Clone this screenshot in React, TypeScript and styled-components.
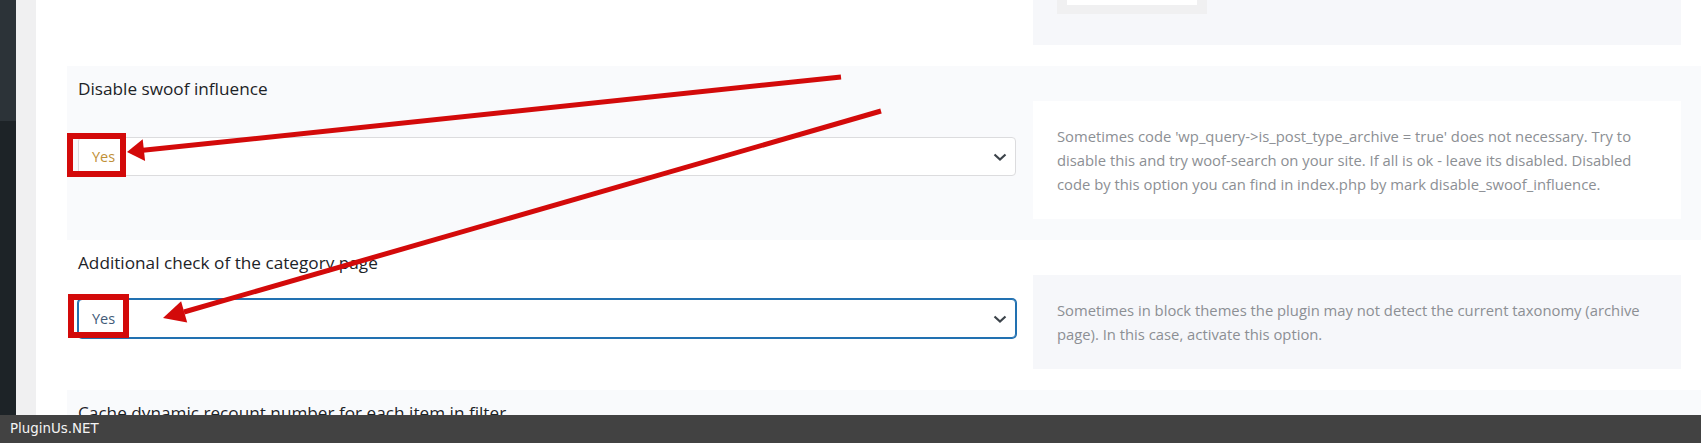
import React, { FC } from 'react';
import styled, { createGlobalStyle } from 'styled-components';

const GlobalStyle = createGlobalStyle`
html, body {
    margin: 0;
    padding: 0;
    background: #ffffff;
    overflow: hidden;
}
body {
    font-family: "Open Sans", "Noto Sans", sans-serif;
}
`;

const Page = styled.div`
position: relative;
display: flex;
height: 100vh;
overflow: hidden;
`;

const AdminMenu = styled.div`
width: 16px;
flex-shrink: 0;
background: linear-gradient(to bottom, #2c3338 0, #2c3338 121px, #1d2327 121px);
`;

const Gutter = styled.div`
width: 20px;
flex-shrink: 0;
background: #f0f0f1;
`;

const Content = styled.div`
flex: 1;
display: flex;
flex-direction: column;
padding-left: 31px;
background: #ffffff;
`;

const Row = styled.div<{ $pale?: boolean; $top?: boolean }>`
background: ${p => (p.$pale ? '#f9fafc' : '#ffffff')};
padding: ${p => (p.$top ? '0' : '10px')} 20px 21px 11px;
flex-shrink: 0;
`;

const Label = styled.div`
font-size: 17.2px;
line-height: 25px;
color: #1d2327;
`;

const Body = styled.div`
display: grid;
grid-template-columns: 1fr 648px;
column-gap: 17px;
align-items: start;
`;

const Control = styled.div<{ $offset: number }>`
padding-top: ${p => p.$offset}px;
`;

const Select = styled.div<{ $focused?: boolean }>`
display: flex;
align-items: center;
justify-content: space-between;
height: 39px;
box-sizing: border-box;
padding: 0 8px 0 13px;
background: #ffffff;
border: 1px solid ${p => (p.$focused ? '#2271b1' : '#dcdcde')};
box-shadow: ${p => (p.$focused ? '0 0 0 1px #2271b1' : 'none')};
border-radius: 4px;
font-size: 14.5px;
color: ${p => (p.$focused ? '#425b78' : '#bf9037')};
`;

const Desc = styled.div<{ $pale?: boolean }>`
background: ${p => (p.$pale ? '#f6f7fa' : '#ffffff')};
padding: 23px 24px;
font-size: 14.8px;
line-height: 24px;
color: #8c8f94;
`;

const DescLine = styled.span`
display: block;
white-space: nowrap;
`;

const ThumbBox = styled.div`
background: #f6f7fa;
height: 45px;
padding-left: 24px;
`;

const Thumb = styled.div`
width: 150px;
height: 14px;
box-sizing: border-box;
background: #f0f0f1;
padding: 0 10px;
`;

const ThumbInner = styled.div`
height: 5px;
background: #ffffff;
`;

const Overlay = styled.svg`
position: absolute;
left: 0;
top: 0;
width: 1701px;
height: 443px;
pointer-events: none;
`;

const BottomBar = styled.div`
position: fixed;
left: 0;
right: 0;
bottom: 0;
height: 28px;
background: #424242;
color: #f4f4f4;
font-family: "DejaVu Sans", sans-serif;
font-size: 13.4px;
line-height: 28px;
padding-left: 10px;
`;

const Chevron: FC = () => (
    <svg width="14" height="8" viewBox="0 0 14 8">
        <path d="M1.5 1.5 L7 6.5 L12.5 1.5" fill="none" stroke="#3c434a" strokeWidth="2.2" />
    </svg>
);

const RED = '#d30a0a';

const App: FC = () => {
    return (
        <>
            <GlobalStyle />
            <Page>
                <AdminMenu />
                <Gutter />
                <Content>
                    <Row $top>
                        <Body>
                            <div />
                            <ThumbBox>
                                <Thumb>
                                    <ThumbInner />
                                </Thumb>
                            </ThumbBox>
                        </Body>
                    </Row>
                    <Row $pale>
                        <Label>Disable swoof influence</Label>
                        <Body>
                            <Control $offset={36}>
                                <Select>
                                    <span>Yes</span>
                                    <Chevron />
                                </Select>
                            </Control>
                            <Desc>
                                <DescLine>Sometimes code 'wp_query-&gt;is_post_type_archive = true' does not necessary. Try to</DescLine>
                                <DescLine>disable this and try woof-search on your site. If all is ok - leave its disabled. Disabled</DescLine>
                                <DescLine>code by this option you can find in index.php by mark disable_swoof_influence.</DescLine>
                            </Desc>
                        </Body>
                    </Row>
                    <Row>
                        <Label>Additional check of the category page</Label>
                        <Body>
                            <Control $offset={24}>
                                <Select $focused>
                                    <span>Yes</span>
                                    <Chevron />
                                </Select>
                            </Control>
                            <Desc $pale>
                                <DescLine>Sometimes in block themes the plugin may not detect the current taxonomy (archive</DescLine>
                                <DescLine>page). In this case, activate this option.</DescLine>
                            </Desc>
                        </Body>
                    </Row>
                    <Row $pale>
                        <Label>Cache dynamic recount number for each item in filter</Label>
                    </Row>
                </Content>
                <Overlay viewBox="0 0 1701 443">
                    <rect x="70" y="136" width="53" height="38" fill="none" stroke={RED} strokeWidth="6" />
                    <rect x="71" y="297" width="55" height="38" fill="none" stroke={RED} strokeWidth="6" />
                    <line x1="841" y1="77" x2="143" y2="150.3" stroke={RED} strokeWidth="5" />
                    <polygon points="127,152 145.1,161.1 142.7,139.3" fill={RED} />
                    <line x1="881" y1="111" x2="184" y2="312" stroke={RED} strokeWidth="5" />
                    <polygon points="163,318 187.2,322.5 181.1,301.3" fill={RED} />
                </Overlay>
                <BottomBar>PluginUs.NET</BottomBar>
            </Page>
        </>
    );
};

export default App;
